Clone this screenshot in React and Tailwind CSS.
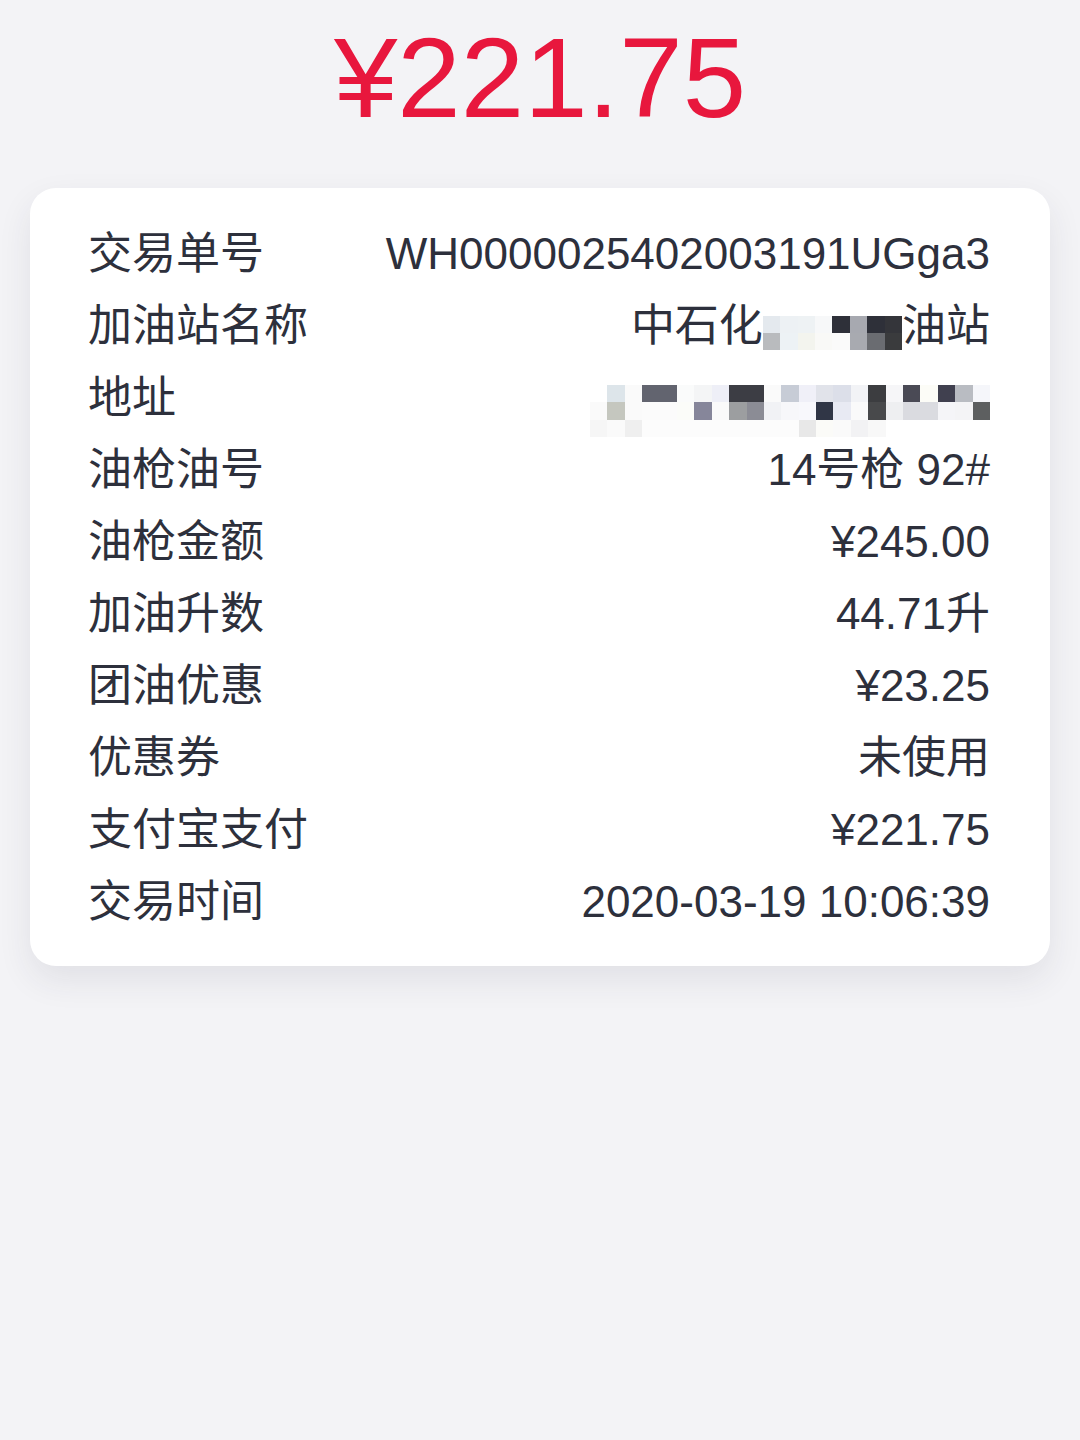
import React from "react";

const FONT = { fontFamily: '"Liberation Sans", Arial, "Noto Sans CJK SC", sans-serif' };

const stationCells = [
  ["bg-[#e4e9ee]", "bg-[#edf1f4]", "bg-[#eef2f4]", "bg-[#f7f8f9]", "bg-[#2e3039]", "bg-[#a7a9b0]", "bg-[#2e3039]", "bg-[#34353a]"],
  ["bg-[#b9bbbe]", "bg-[#edf2f5]", "bg-[#f3f4ee]", "bg-[#f9f9f7]", "bg-[#fafafa]", "bg-[#a8aab0]", "bg-[#6a6c71]", "bg-[#3a3b3d]"],
];

const addrCells = [
  ["bg-[#ffffff]", "bg-[#dde5ea]", "bg-[#fafafa]", "bg-[#62646f]", "bg-[#62646f]", "bg-[#fafbfb]", "bg-[#f4f5f6]", "bg-[#eeeff7]", "bg-[#3c3d44]", "bg-[#3c3d44]", "bg-[#fafafa]", "bg-[#c7ccd6]", "bg-[#f0f0f8]", "bg-[#e1e3ea]", "bg-[#dcdfe9]", "bg-[#f2f3f6]", "bg-[#3c3d40]", "bg-[#f6f6f8]", "bg-[#4a4a55]", "bg-[#fcfcf7]", "bg-[#40404f]", "bg-[#b9bcc2]", "bg-[#f5f6fa]"],
  ["bg-[#fafafa]", "bg-[#c5c7bf]", "bg-[#fafafa]", "bg-[#fbfbfb]", "bg-[#fbfbfb]", "bg-[#fbfcf9]", "bg-[#86869a]", "bg-[#fafafa]", "bg-[#9c9ea0]", "bg-[#8b8c95]", "bg-[#f1f2f5]", "bg-[#f7f7fa]", "bg-[#f8f8fc]", "bg-[#303646]", "bg-[#e8eaf3]", "bg-[#fafafa]", "bg-[#48494b]", "bg-[#eeeff1]", "bg-[#dadbe0]", "bg-[#dadbe0]", "bg-[#f5f5f8]", "bg-[#f4f4f6]", "bg-[#5d5f60]"],
  ["bg-[#f6f6f6]", "bg-[#fafafa]", "bg-[#efefef]", "bg-[#fcfcfc]", "bg-[#fcfcfc]", "bg-[#fcfcfc]", "bg-[#fcfcfc]", "bg-[#fcfcfc]", "bg-[#fcfcfc]", "bg-[#fcfcfc]", "bg-[#fcfcfc]", "bg-[#fcfcfc]", "bg-[#e8e8e8]", "bg-[#fbfbf8]", "bg-[#fafafa]", "bg-[#f2f2f4]", "bg-[#f8f8f8]", "bg-[#ffffff]", "bg-[#ffffff]", "bg-[#ffffff]", "bg-[#ffffff]", "bg-[#ffffff]", "bg-[#ffffff]"],
];

function Mosaic({ rows, cls }) {
  return (
    <div className={cls}>
      {rows.map((r, i) => (
        <div key={i} className="flex">
          {r.map((c, j) => (
            <div key={j} className={`w-[17.4px] h-[17.4px] ${c}`} />
          ))}
        </div>
      ))}
    </div>
  );
}

function Row({ label, children }) {
  return (
    <div className="flex h-[72px] items-center justify-between">
      <div className="text-[44px] text-[#2d303c] whitespace-nowrap">{label}</div>
      <div className="flex items-center text-[44px] text-[#2d303c] whitespace-nowrap">{children}</div>
    </div>
  );
}

export default function App() {
  return (
    <div className="min-h-[1440px] w-[1080px] bg-[#f3f3f6]" style={FONT}>
      <div className="pt-[21px] text-center text-[114px] leading-[114px] text-[#e8173d]">¥221.75</div>
      <div className="mx-[30px] mt-[53px] rounded-[26px] bg-white pl-[58px] pr-[60px] pt-[30px] pb-[28px] shadow-[0_14px_34px_rgba(40,40,70,0.09)]">
        <Row label="交易单号">WH0000025402003191UGga3</Row>
        <Row label="加油站名称">
          <span>中石化</span>
          <Mosaic rows={stationCells} cls="mt-[14px]" />
          <span>油站</span>
        </Row>
        <Row label="地址">
          <Mosaic rows={addrCells} cls="mt-[26px]" />
        </Row>
        <Row label="油枪油号">14号枪 92#</Row>
        <Row label="油枪金额">¥245.00</Row>
        <Row label="加油升数">44.71升</Row>
        <Row label="团油优惠">¥23.25</Row>
        <Row label="优惠券">未使用</Row>
        <Row label="支付宝支付">¥221.75</Row>
        <Row label="交易时间">2020-03-19 10:06:39</Row>
      </div>
    </div>
  );
}
